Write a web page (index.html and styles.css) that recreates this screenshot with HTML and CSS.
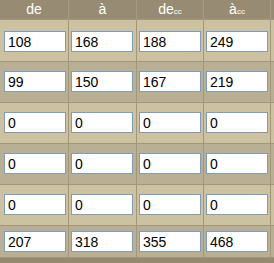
FILE: index.html
```html
<!DOCTYPE html>
<html>
<head>
<meta charset="utf-8">
<link rel="stylesheet" href="styles.css">
</head>
<body>
<div class="table">
  <div class="head">
    <div class="hcell">de</div>
    <div class="hcell">à</div>
    <div class="hcell">de<span class="sub">cc</span></div>
    <div class="hcell">à<span class="sub">cc</span></div>
  </div>
  <div class="row light first">
    <div class="cell c1"><input class="field" value="108"></div>
    <div class="cell"><input class="field" value="168"></div>
    <div class="cell"><input class="field" value="188"></div>
    <div class="cell"><input class="field" value="249"></div>
  </div>
  <div class="row dark">
    <div class="cell c1"><input class="field" value="99"></div>
    <div class="cell"><input class="field" value="150"></div>
    <div class="cell"><input class="field" value="167"></div>
    <div class="cell"><input class="field" value="219"></div>
  </div>
  <div class="row light">
    <div class="cell c1"><input class="field" value="0"></div>
    <div class="cell"><input class="field" value="0"></div>
    <div class="cell"><input class="field" value="0"></div>
    <div class="cell"><input class="field" value="0"></div>
  </div>
  <div class="row dark">
    <div class="cell c1"><input class="field" value="0"></div>
    <div class="cell"><input class="field" value="0"></div>
    <div class="cell"><input class="field" value="0"></div>
    <div class="cell"><input class="field" value="0"></div>
  </div>
  <div class="row light">
    <div class="cell c1"><input class="field" value="0"></div>
    <div class="cell"><input class="field" value="0"></div>
    <div class="cell"><input class="field" value="0"></div>
    <div class="cell"><input class="field" value="0"></div>
  </div>
  <div class="row dark last">
    <div class="cell c1"><input class="field" value="207"></div>
    <div class="cell"><input class="field" value="318"></div>
    <div class="cell"><input class="field" value="355"></div>
    <div class="cell"><input class="field" value="468"></div>
  </div>
  <div class="foot"></div>
</div>
</body>
</html>
```
FILE: styles.css
```css
html, body {
  margin: 0;
  padding: 0;
  background: #b9af95;
}
.table {
  width: 274px;
  height: 263px;
  overflow: hidden;
  font-family: "Liberation Sans", Arial, sans-serif;
}
.head {
  display: grid;
  grid-template-columns: 69px 68px 67px 67px 3px;
  height: 19px;
  background: #978c73;
  border-bottom: 1px solid #a3977a;
}
.hcell {
  border-right: 1px solid #a79c83;
  color: #ffffff;
  font-size: 14px;
  line-height: 19px;
  text-align: center;
}
.sub {
  font-size: 8px;
  line-height: 8px;
}
.row {
  display: grid;
  grid-template-columns: 69px 68px 67px 67px 3px;
  padding: 9px 0 10px 0;
  border-bottom: 1px solid #a3977a;
}
.row.first {
  padding-top: 11px;
  padding-bottom: 9px;
}
.row.last {
  padding-top: 5px;
  padding-bottom: 5px;
}
.light {
  background: #ccc2a1;
}
.dark {
  background: #b9af95;
}
.cell {
  border-right: 1px solid #a3977a;
  padding-left: 2px;
  margin-top: -9px;
  margin-bottom: -10px;
  padding-top: 9px;
  padding-bottom: 10px;
}
.row.first .cell {
  margin-top: -11px;
  padding-top: 11px;
  margin-bottom: -9px;
  padding-bottom: 9px;
}
.row.last .cell {
  margin-top: -5px;
  padding-top: 5px;
  margin-bottom: -5px;
  padding-bottom: 5px;
}
.cell.c1 {
  padding-left: 4px;
}
.field {
  display: block;
  box-sizing: border-box;
  width: 62px;
  height: 21px;
  margin: 0;
  border: 1px solid #7f9db9;
  background: #ffffff;
  padding: 0 0 0 3px;
  font-family: "Liberation Sans", Arial, sans-serif;
  font-size: 14px;
  color: #000000;
  outline: none;
}
.foot {
  height: 6px;
  background: #958a70;
}
```
